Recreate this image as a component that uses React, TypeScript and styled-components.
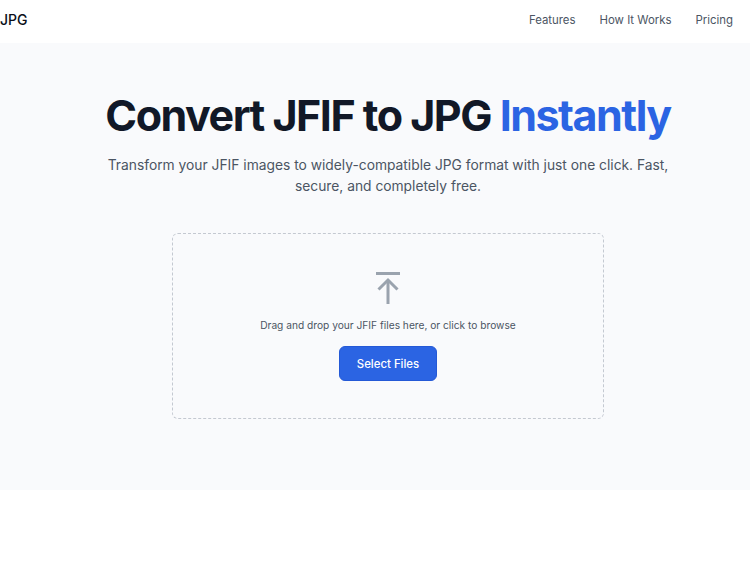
import React from "react";
import styled, { createGlobalStyle } from "styled-components";

const Global = createGlobalStyle`
  html, body { margin: 0; padding: 0; background: #fff; }
  body { font-family: Inter, "Liberation Sans", sans-serif; -webkit-font-smoothing: antialiased; }
`;
const Page = styled.div`
  width: 750px;
  height: 563px;
  overflow: hidden;
  background: #fff;
`;
const Header = styled.header`
  height: 43px;
  box-sizing: border-box;
  display: flex;
  align-items: center;
  justify-content: space-between;
  padding: 0 17px 4px 0;
  background: #fff;
`;
const Logo = styled.div`
  font-size: 14px;
  font-weight: 500;
  color: #0b0f19;
`;
const Nav = styled.nav`
  display: flex;
  gap: 24px;
`;
const NavLink = styled.a`
  font-size: 11.4px;
  color: #4b5563;
`;
const Hero = styled.section`
  height: 447px;
  box-sizing: border-box;
  background: #f9fafc;
  display: flex;
  flex-direction: column;
  align-items: center;
  padding: 48px 0 0 26px;
`;
const Title = styled.h1`
  margin: 0;
  font-size: 43px;
  line-height: 48px;
  font-weight: 700;
  letter-spacing: -1.5px;
  color: #111827;
  white-space: nowrap;
`;
const Accent = styled.span`
  color: #2b64e3;
`;
const Lead = styled.p`
  margin: 16px 0 0;
  width: 576px;
  font-size: 13.8px;
  line-height: 21px;
  text-align: center;
  color: #4b5563;
`;
const Drop = styled.div`
  margin-top: 36px;
  width: 432px;
  height: 186px;
  box-sizing: border-box;
  border: 1px dashed #c4c9d1;
  border-radius: 6px;
  display: flex;
  flex-direction: column;
  align-items: center;
  padding-top: 37px;
`;
const UploadIcon = styled.svg`
  width: 26px;
  height: 34px;
  color: #9aa3ae;
`;
const DropText = styled.p`
  margin: 12px 0 0;
  font-size: 10.2px;
  line-height: 16px;
  color: #4b5563;
`;
const Button = styled.button`
  margin-top: 13px;
  width: 98px;
  height: 35px;
  border: 1px solid #2459d6;
  border-radius: 6px;
  background: #2b64e3;
  color: #fff;
  font-family: inherit;
  font-size: 11.4px;
  font-weight: 500;
`;

export default function App() {
  return (
    <Page>
      <Global />
      <Header>
        <Logo>JPG</Logo>
        <Nav>
          <NavLink>Features</NavLink>
          <NavLink>How It Works</NavLink>
          <NavLink>Pricing</NavLink>
        </Nav>
      </Header>
      <Hero>
        <Title>
          Convert JFIF to JPG <Accent>Instantly</Accent>
        </Title>
        <Lead>
          Transform your JFIF images to widely-compatible JPG format with just one click. Fast, secure, and completely free.
        </Lead>
        <Drop>
          <UploadIcon viewBox="0 0 26 34" fill="none" stroke="currentColor" strokeWidth="3">
            <path d="M1 2.5h24" />
            <path d="M13 33V9" />
            <path d="M3.5 18.5L13 9l9.5 9.5" />
          </UploadIcon>
          <DropText>Drag and drop your JFIF files here, or click to browse</DropText>
          <Button>Select Files</Button>
        </Drop>
      </Hero>
    </Page>
  );
}
